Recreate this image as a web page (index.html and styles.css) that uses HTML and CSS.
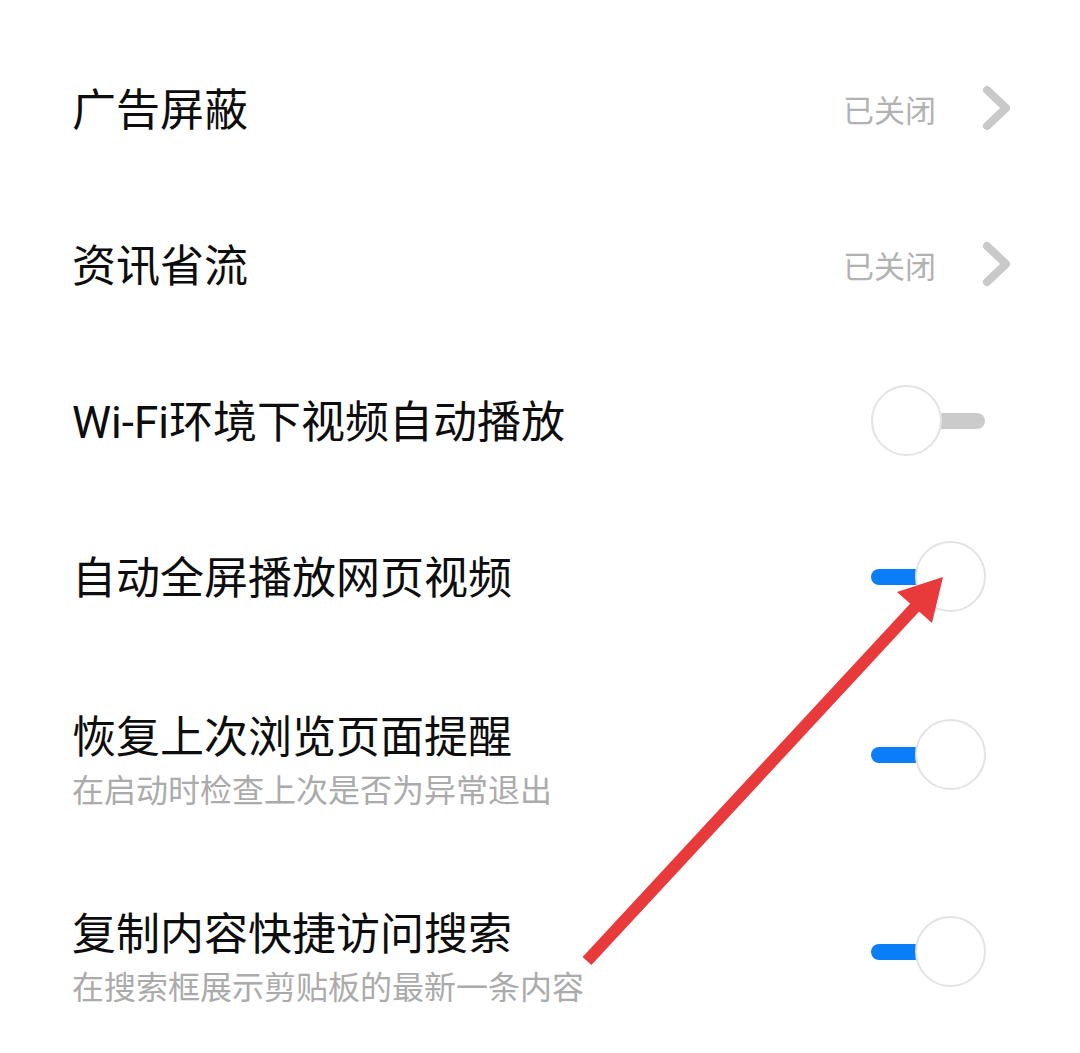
FILE: index.html
```html
<!DOCTYPE html>
<html lang="zh-CN">
<head>
<meta charset="utf-8">
<link rel="stylesheet" href="styles.css">
</head>
<body>
<div class="page">
  <div class="list">
    <div class="row r1 nav">
      <div class="text one"><div class="title">广告屏蔽</div></div>
      <div class="value">已关闭</div>
      <svg class="chev" width="30" height="46" viewBox="0 0 30 46"><path d="M5 5 L24 23 L5 41" fill="none" stroke="#c9c9c9" stroke-width="8" stroke-linecap="round" stroke-linejoin="round"/></svg>
    </div>
    <div class="row r1 nav">
      <div class="text one"><div class="title">资讯省流</div></div>
      <div class="value">已关闭</div>
      <svg class="chev" width="30" height="46" viewBox="0 0 30 46"><path d="M5 5 L24 23 L5 41" fill="none" stroke="#c9c9c9" stroke-width="8" stroke-linecap="round" stroke-linejoin="round"/></svg>
    </div>
    <div class="row r1">
      <div class="text one"><div class="title">Wi-Fi环境下视频自动播放</div></div>
      <div class="switch off"><span class="track"></span><span class="knob"></span></div>
    </div>
    <div class="row r1">
      <div class="text one"><div class="title">自动全屏播放网页视频</div></div>
      <div class="switch on"><span class="track"></span><span class="knob"></span></div>
    </div>
    <div class="row r2">
      <div class="text two"><div class="title">恢复上次浏览页面提醒</div><div class="sub">在启动时检查上次是否为异常退出</div></div>
      <div class="switch on"><span class="track"></span><span class="knob"></span></div>
    </div>
    <div class="row r3">
      <div class="text two"><div class="title">复制内容快捷访问搜索</div><div class="sub">在搜索框展示剪贴板的最新一条内容</div></div>
      <div class="switch on"><span class="track"></span><span class="knob"></span></div>
    </div>
  </div>
  <svg class="arrow" width="1080" height="1053" viewBox="0 0 1080 1053">
    <line x1="587" y1="961" x2="918" y2="604" stroke="#e8393b" stroke-width="12"/>
    <polygon points="943,577 897,592 932,623" fill="#e8393b"/>
  </svg>
</div>
</body>
</html>
```
FILE: styles.css
```css
html, body {
  margin: 0;
  padding: 0;
  background: #ffffff;
}
body {
  font-family: "Roboto", "Noto Sans CJK SC", sans-serif;
  color: #111111;
}
.page {
  position: relative;
  width: 1080px;
  height: 1053px;
  overflow: hidden;
}
.list {
  padding-top: 30px;
  display: flex;
  flex-direction: column;
}
.row {
  display: flex;
  align-items: center;
  padding: 0 72px 0 72px;
}
.row.nav {
  padding-right: 68px;
}
.r1 { height: 156px; }
.r2 { height: 200px; }
.r3 { height: 194px; }
.text {
  flex: 1;
  display: flex;
  flex-direction: column;
}
.text.one {
  padding-top: 6px;
}
.text.two {
  padding-top: 18px;
}
.title {
  font-size: 44px;
  line-height: 56px;
  color: #0d0d0d;
}
.sub {
  font-size: 32px;
  line-height: 50px;
  color: #ababab;
}
.value {
  font-size: 31px;
  color: #b2b2b2;
  margin-right: 46px;
}
.chev {
  display: block;
}
.switch {
  position: relative;
  width: 115px;
  height: 71px;
  margin-right: 22px;
}
.track {
  position: absolute;
  top: 28px;
  height: 16px;
  border-radius: 8px;
}
.switch.off .track {
  left: 40px;
  right: 1px;
  background: #cbcbcb;
}
.switch.on .track {
  left: 0;
  right: 40px;
  background: #0a7ef8;
}
.knob {
  position: absolute;
  top: 0;
  width: 67px;
  height: 67px;
  border-radius: 50%;
  border: 2px solid #e3e3e3;
  background: #ffffff;
}
.switch.off .knob { left: 0; }
.switch.on .knob { right: 0; }
.arrow {
  position: absolute;
  left: 0;
  top: 0;
  pointer-events: none;
}
```
